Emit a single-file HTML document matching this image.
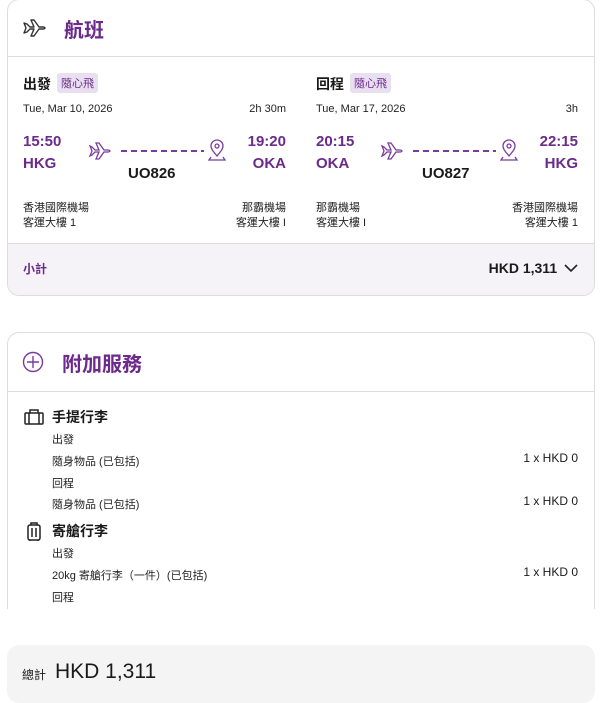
<!DOCTYPE html>
<html><head><meta charset="utf-8"><style>
*{box-sizing:border-box;margin:0;padding:0}
body{width:600px;height:703px;background:#fff;font-family:"Liberation Sans","Noto Sans CJK TC",sans-serif;color:#1a1a1a;position:relative;overflow:hidden}
.card{position:absolute;left:7px;width:588px;border:1px solid #ddd;border-radius:12px;background:#fff;overflow:hidden}
.hdr{height:57px;border-bottom:1px solid #ddd;display:flex;align-items:center;padding-left:14px}
.hdr h2{font-size:20px;color:#6b2a8c;font-weight:700;margin-left:18px}
.abs{position:absolute;white-space:nowrap}
.p{color:#6b2a8c;font-weight:700;font-size:15px}
.tag{display:inline-block;background:#e8dff0;color:#6b2a8c;font-size:11px;padding:2px 4px;border-radius:3px;margin-left:6px;vertical-align:2px;font-weight:400}
.s{font-size:11px;color:#222}
</style></head><body>
<div class="card" style="top:-1px;height:297px">
 <div class="hdr"><svg width="24" height="22" viewBox="0 0 24 22" fill="none" stroke="#333" stroke-width="1.4" stroke-linejoin="round"><path d="M2 6l3 1 3 3h4L9 3h3l5 7h4c1.5 0 2 1 2 1s-.5 1-2 1h-4l-5 7H9l3-7H8l-3 3-3 1 2-5z"/></svg><h2>航班</h2></div>
 <div style="position:relative;height:186px">
  <div class="abs" style="left:15px;top:16px;font-size:14px;font-weight:700">出發<span class="tag">隨心飛</span></div>
  <div class="abs s" style="left:15px;top:46px">Tue, Mar 10, 2026</div>
  <div class="abs s" style="right:308px;top:46px">2h 30m</div>
  <div class="abs p" style="left:15px;top:76px">15:50</div>
  <div class="abs p" style="left:15px;top:98px">HKG</div>
  <div class="abs p" style="right:308px;top:76px">19:20</div>
  <div class="abs p" style="right:308px;top:98px">OKA</div>
  <div class="abs" style="left:120px;top:108px;font-size:15px;font-weight:700">UO826</div>
  <svg class="abs" style="left:80px;top:82px" width="140" height="24" viewBox="0 0 140 24" fill="none" stroke="#7b3a9c" stroke-width="1.3"><path d="M2 7l2 1 3 3h4L8 4h3l5 7h4c1.5 0 2 1 2 1s-.5 1-2 1h-4l-5 7H8l3-7H7l-3 3-2 1 2-5z"/><path d="M33 12h83" stroke-dasharray="6 4" stroke-width="2"/><path d="M129 17c-4-5-6-7-6-10a6 6 0 0112 0c0 3-2 5-6 10z"/><circle cx="129" cy="7" r="2"/><path d="M123 18l-2 3h16l-2-3"/></svg>
  <div class="abs s" style="left:15px;top:142px">香港國際機場</div>
  <div class="abs s" style="left:15px;top:157px">客運大樓 1</div>
  <div class="abs s" style="right:308px;top:142px">那霸機場</div>
  <div class="abs s" style="right:308px;top:157px">客運大樓 I</div>

  <div class="abs" style="left:308px;top:16px;font-size:14px;font-weight:700">回程<span class="tag">隨心飛</span></div>
  <div class="abs s" style="left:308px;top:46px">Tue, Mar 17, 2026</div>
  <div class="abs s" style="right:16px;top:46px">3h</div>
  <div class="abs p" style="left:308px;top:76px">20:15</div>
  <div class="abs p" style="left:308px;top:98px">OKA</div>
  <div class="abs p" style="right:16px;top:76px">22:15</div>
  <div class="abs p" style="right:16px;top:98px">HKG</div>
  <div class="abs" style="left:414px;top:108px;font-size:15px;font-weight:700">UO827</div>
  <svg class="abs" style="left:372px;top:82px" width="140" height="24" viewBox="0 0 140 24" fill="none" stroke="#7b3a9c" stroke-width="1.3"><path d="M2 7l2 1 3 3h4L8 4h3l5 7h4c1.5 0 2 1 2 1s-.5 1-2 1h-4l-5 7H8l3-7H7l-3 3-2 1 2-5z"/><path d="M33 12h83" stroke-dasharray="6 4" stroke-width="2"/><path d="M129 17c-4-5-6-7-6-10a6 6 0 0112 0c0 3-2 5-6 10z"/><circle cx="129" cy="7" r="2"/><path d="M123 18l-2 3h16l-2-3"/></svg>
  <div class="abs s" style="left:308px;top:142px">那霸機場</div>
  <div class="abs s" style="left:308px;top:157px">客運大樓 I</div>
  <div class="abs s" style="right:16px;top:142px">香港國際機場</div>
  <div class="abs s" style="right:16px;top:157px">客運大樓 1</div>
 </div>
 <div style="position:relative;height:52px;background:#f5f3f8;border-top:1px solid #ddd">
  <div class="abs" style="left:15px;top:16px;font-size:12px;color:#6b2a8c;font-weight:700">小計</div>
  <div class="abs" style="right:16px;top:16px;font-size:14px;font-weight:700">HKD 1,311 <svg width="14" height="10" viewBox="0 0 14 10" fill="none" stroke="#222" stroke-width="1.6" style="margin-left:3px"><path d="M1 2l6 6 6-6"/></svg></div>
 </div>
</div>

<div class="card" style="top:332px;height:300px;border-bottom:none;border-radius:12px 12px 0 0">
 <div class="hdr" style="height:59px"><svg width="22" height="22" viewBox="0 0 22 22" fill="none" stroke="#7b3a9c" stroke-width="1.4"><circle cx="11" cy="11" r="9.5"/><path d="M11 5v12M5 11h12"/></svg><h2>附加服務</h2></div>
 <div style="position:relative">
  <svg class="abs" style="left:16px;top:17px" width="20" height="16" viewBox="0 0 20 16" fill="none" stroke="#222" stroke-width="1.5"><rect x="1" y="4" width="18" height="11" rx="1"/><path d="M6 4V1h8v3M5 4v11M15 4v11"/></svg>
  <div class="abs" style="left:44px;top:15px;font-size:14px;font-weight:700">手提行李</div>
  <div class="abs s" style="left:44px;top:39px">出發</div>
  <div class="abs s" style="left:44px;top:61px">隨身物品 (已包括)</div>
  <div class="abs" style="right:16px;top:59px;font-size:12px">1 x HKD 0</div>
  <div class="abs s" style="left:44px;top:83px">回程</div>
  <div class="abs s" style="left:44px;top:104px">隨身物品 (已包括)</div>
  <div class="abs" style="right:16px;top:102px;font-size:12px">1 x HKD 0</div>
  <svg class="abs" style="left:19px;top:130px" width="14" height="20" viewBox="0 0 14 20" fill="none" stroke="#222" stroke-width="1.5"><rect x="1" y="3" width="12" height="15" rx="2"/><path d="M4 3V1h6v2M5 6v9M9 6v9M3 18v1M11 18v1"/></svg>
  <div class="abs" style="left:44px;top:129px;font-size:14px;font-weight:700">寄艙行李</div>
  <div class="abs s" style="left:44px;top:153px">出發</div>
  <div class="abs s" style="left:44px;top:175px">20kg 寄艙行李（一件）(已包括)</div>
  <div class="abs" style="right:16px;top:173px;font-size:12px">1 x HKD 0</div>
  <div class="abs s" style="left:44px;top:197px">回程</div>
 </div>
</div>
<div style="position:absolute;left:0;top:609px;width:600px;height:36px;background:#fff"></div>
<div style="position:absolute;left:7px;top:645px;width:588px;height:58px;background:#f4f4f4;border-radius:12px">
 <span class="abs" style="left:15px;top:21px;font-size:12px">總計</span>
 <span class="abs" style="left:48px;top:15px;font-size:21px">HKD 1,311</span>
</div>
</body></html>
